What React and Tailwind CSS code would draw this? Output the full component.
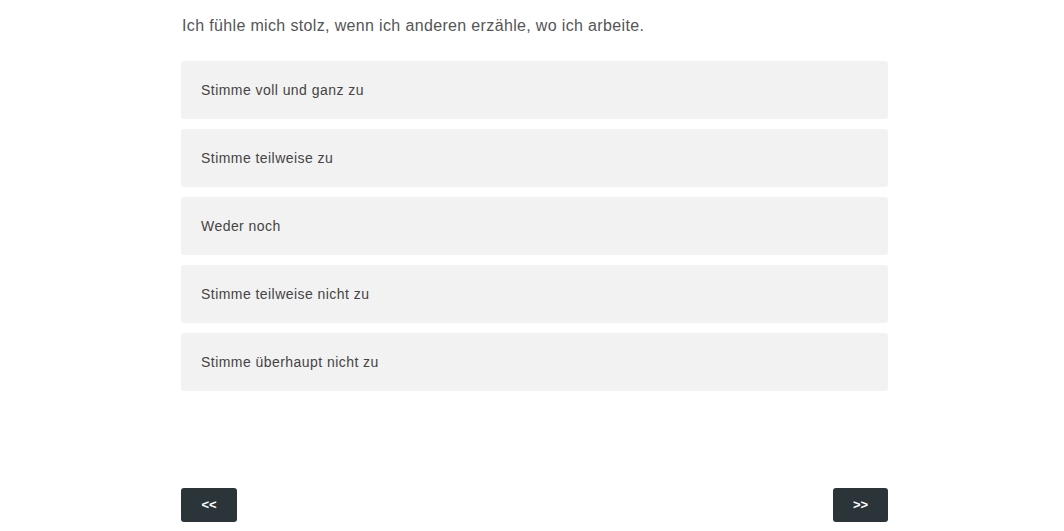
import React from "react";

const OPTIONS = [
  "Stimme voll und ganz zu",
  "Stimme teilweise zu",
  "Weder noch",
  "Stimme teilweise nicht zu",
  "Stimme überhaupt nicht zu",
];

const App = () => {
  return (
    <div
      className="min-h-screen bg-white"
      style={{ fontFamily: '"Liberation Sans", Arial, sans-serif' }}
    >
      <div className="w-[707px] ml-[181px] pt-[14px]">
        {/* Question */}
        <p className="text-[16px] leading-[24px] tracking-[0.35px] text-[#555555] pl-[1px]">
          Ich fühle mich stolz, wenn ich anderen erzähle, wo ich arbeite.
        </p>

        {/* Answers */}
        <div className="mt-[23px] flex flex-col gap-[10px]">
          {OPTIONS.map((label) => (
            <button
              key={label}
              className="h-[58px] w-full rounded-[3px] bg-[#f2f2f2] px-[20px] text-left text-[14px] tracking-[0.45px] text-[#444444]"
            >
              {label}
            </button>
          ))}
        </div>

        {/* Navigation */}
        <div className="mt-[97px] flex items-center justify-between">
          <button className="h-[34px] w-[56px] rounded-[3px] bg-[#2b3539] text-[13px] font-bold text-white">
            &lt;&lt;
          </button>
          <button className="h-[34px] w-[55px] rounded-[3px] bg-[#2b3539] text-[13px] font-bold text-white">
            &gt;&gt;
          </button>
        </div>
      </div>
    </div>
  );
};

export default App;
